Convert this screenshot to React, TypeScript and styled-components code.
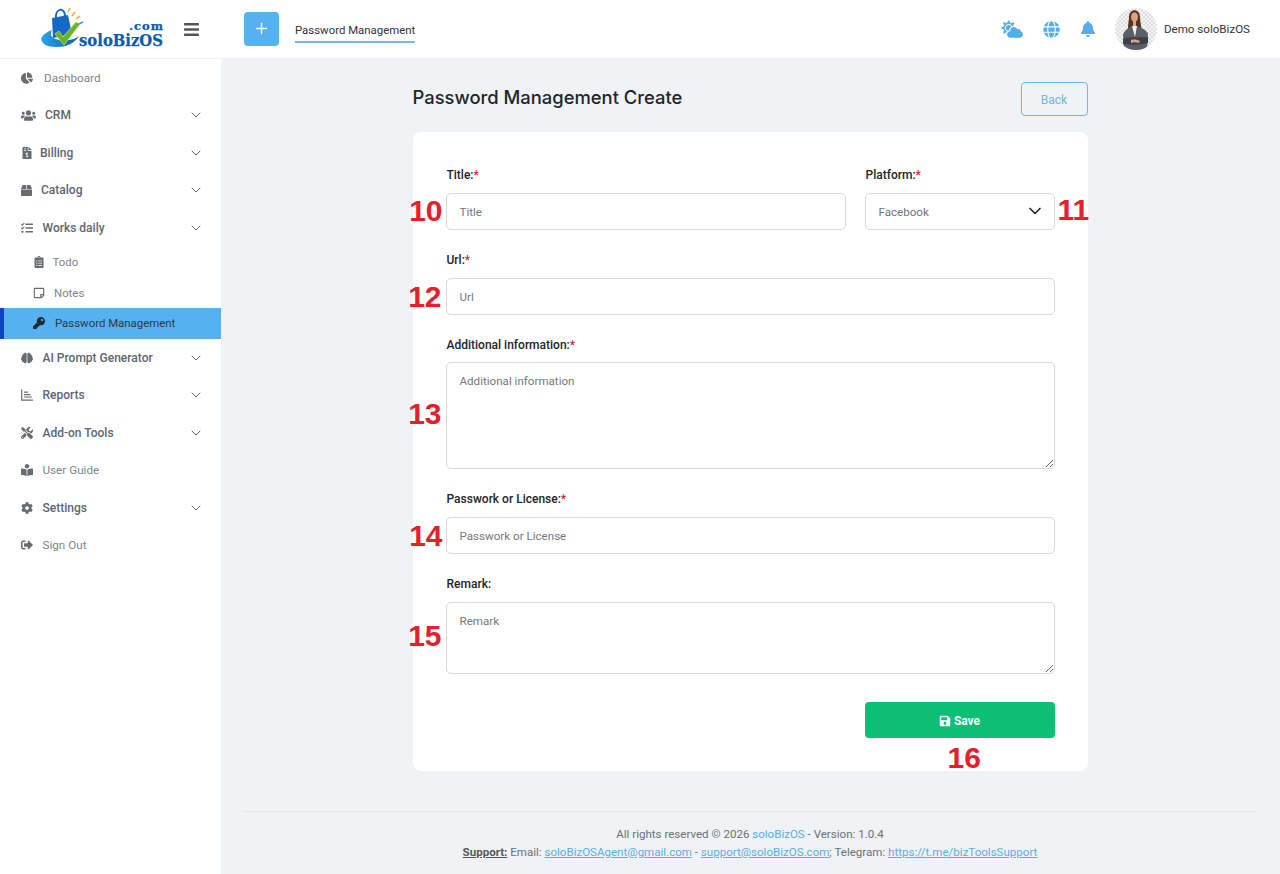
import React from "react";
import styled, { createGlobalStyle } from "styled-components";
import { ChevronDown, Plus } from "lucide-react";
import {
  FaBars, FaBell, FaBookReader, FaBox, FaBrain, FaChartPie, FaClipboardList, FaCloudSun, FaCog,
  FaFileInvoiceDollar, FaGlobe, FaKey, FaRegStickyNote, FaSave, FaSignOutAlt,
  FaTasks, FaTools, FaUsers,
} from "react-icons/fa";

const UI_FONT = `Roboto, "Open Sans", "Liberation Sans", sans-serif`;

const Global = createGlobalStyle`
  html, body { margin: 0; padding: 0; height: 100%; overflow: hidden; background: #eff3f6; }
  #root { height: 100%; }
  * { box-sizing: border-box; }
  body { font-family: ${UI_FONT}; font-size: 12px; color: #333; }
`;

const Shell = styled.div`
  display: grid;
  grid-template-columns: 221px 1fr;
  grid-template-rows: 59px 1fr;
  height: 874px;
`;

const Header = styled.header`
  grid-column: 1 / 3;
  display: flex;
  align-items: center;
  background: #fff;
  border-bottom: 1px solid #eef0f2;
`;

const Brand = styled.div`
  display: flex;
  align-items: center;
  width: 244px;
  flex: none;
  padding-left: 38px;
`;

const MenuToggle = styled.span`
  display: inline-flex;
  margin-left: 18px;
  color: #555;
  font-size: 17px;
`;

const AddButton = styled.button`
  width: 35px;
  height: 34px;
  margin-top: -1px;
  border: 0;
  border-radius: 4px;
  background: #55b1f0;
  color: #fff;
  padding: 0;
  display: flex;
  align-items: center;
  justify-content: center;
`;

const TopTab = styled.div`
  margin-left: 16px;
  padding: 6px 0 2px;
  border-bottom: 2px solid #7ab9dd;
  color: #333;
  font-size: 11.4px;
  line-height: 17px;
  margin-top: 1px;
`;

const HeaderRight = styled.div`
  margin-left: auto;
  display: flex;
  align-items: center;
  padding-right: 30px;
`;

const TopIcon = styled.span<{ $size: number; $gap: number }>`
  display: inline-flex;
  margin-right: ${(p) => p.$gap}px;
  color: #55aeea;
  font-size: ${(p) => p.$size}px;
`;

const UserName = styled.span`
  margin-left: 7px;
  color: #333;
  font-size: 11.6px;
`;

const Sidebar = styled.nav`
  background: #fff;
  display: flex;
  flex-direction: column;
`;

const NavRow = styled.div<{ $strong: boolean }>`
  height: 37.5px;
  display: flex;
  align-items: center;
  padding: 0 17px 0 21px;
  color: ${(p) => (p.$strong ? "#5c6670" : "#7d858c")};
  font-weight: ${(p) => (p.$strong ? 500 : 400)};
  font-size: ${(p) => (p.$strong ? 12 : 11.7)}px;
`;

const IconSlot = styled.span<{ $width: number; $size?: number }>`
  width: ${(p) => p.$width}px;
  flex: none;
  display: inline-flex;
  align-items: center;
  font-size: ${(p) => p.$size ?? 12}px;
  color: #666c72;
`;

const NavChevron = styled(ChevronDown)`
  margin-left: auto;
  color: #666;
`;

const SubRow = styled.div<{ $active?: boolean }>`
  height: 30.8px;
  display: flex;
  align-items: center;
  padding-left: ${(p) => (p.$active ? 29 : 33)}px;
  font-size: 11.4px;
  color: ${(p) => (p.$active ? "#2b3a4a" : "#7d858c")};
  background: ${(p) => (p.$active ? "#55b1f0" : "transparent")};
  border-left: ${(p) => (p.$active ? "4px solid #0b45c4" : "0")};
`;

const SubIcon = styled(IconSlot)<{ $dark?: boolean }>`
  color: ${(p) => (p.$dark ? "#1d2b3a" : "#666c72")};
`;

const Main = styled.main`
  display: flex;
  flex-direction: column;
  padding: 0 24px 0 23px;
`;

const Column = styled.div`
  width: 675px;
  margin: 0 auto;
`;

const TitleBar = styled.div`
  height: 73px;
  display: flex;
  align-items: flex-start;
  justify-content: space-between;
  padding-top: 23px;
`;

const PageTitle = styled.h1`
  margin: -1px 0 0;
  font: 500 18.4px/32px Inter, "Liberation Sans", sans-serif;
  color: #212529;
`;

const BackButton = styled.button`
  width: 67px;
  height: 34px;
  padding: 1px 0 0;
  border: 1px solid #6db8e0;
  border-radius: 4px;
  background: transparent;
  color: #6db8e0;
  font: 400 12px ${UI_FONT};
`;

const Card = styled.section`
  background: #fff;
  border-radius: 8px;
  height: 639px;
  padding: 32px 33px;
`;

const TopGrid = styled.div`
  display: grid;
  grid-template-columns: 400px 190px;
  column-gap: 19px;
`;

const Field = styled.div<{ $after?: number }>`
  margin-bottom: ${(p) => p.$after ?? 19}px;
`;

const Label = styled.label<{ $below?: number }>`
  display: block;
  height: 20px;
  margin-bottom: ${(p) => p.$below ?? 9}px;
  padding: 1px 0 0 1px;
  font-size: 12px;
  font-weight: 500;
  line-height: 20px;
  color: #212529;
`;

const Req = styled.span`
  color: #dc1f3c;
`;

const ControlWrap = styled.div`
  position: relative;
  display: flex;
`;

const controlCss = `
  width: 100%;
  border: 1px solid #d6d8da;
  border-radius: 5px;
  background: #fff;
  font-family: ${UI_FONT};
  font-size: 11.6px;
  color: #6f7478;
  padding: 0 13px;
  outline: none;
  &::placeholder { color: #75797d; opacity: 1; }
`;

const TextInput = styled.input`
  ${controlCss}
  height: 37px;
`;

const TextArea = styled.textarea<{ $height: number }>`
  ${controlCss}
  display: block;
  height: ${(p) => p.$height}px;
  padding-top: 10px;
  line-height: 17px;
  resize: vertical;
`;

const SelectBox = styled.select`
  ${controlCss}
  height: 37px;
  appearance: none;
`;

const SelectArrow = styled(ChevronDown)`
  position: absolute;
  right: 10px;
  top: 8px;
  color: #212529;
  pointer-events: none;
`;

const Marker = styled.span<{ $gap?: number; $side?: "left" | "right"; $lift?: number }>`
  position: absolute;
  top: 50%;
  transform: translateY(calc(-50% - ${(p) => p.$lift ?? 0}px));
  ${(p) => (p.$side === "right" ? "left" : "right")}: calc(100% + ${(p) => p.$gap ?? 4}px);
  font: 700 30px/34px "Liberation Sans", sans-serif;
  color: #e4202c;
  pointer-events: none;
`;

const SaveRow = styled.div`
  display: flex;
  justify-content: flex-end;
  margin-top: 28px;
`;

const SaveWrap = styled.div`
  position: relative;
  width: 190px;
`;

const SaveButton = styled.button`
  width: 100%;
  height: 36px;
  padding: 1px 0 0;
  border: 0;
  border-radius: 4px;
  background: #0dbf75;
  color: #fff;
  font: 700 12px ${UI_FONT};
  display: flex;
  align-items: center;
  justify-content: center;
  gap: 3px;
`;

const SaveMarker = styled.span`
  position: absolute;
  top: calc(100% + 3px);
  left: 83px;
  font: 700 30px/34px "Liberation Sans", sans-serif;
  color: #e4202c;
`;

const Footer = styled.footer`
  margin-top: 40px;
  border-top: 1px solid #e2e6ea;
  padding-top: 13px;
  text-align: center;
  font-size: 11.55px;
  line-height: 18px;
  color: #6c7075;
`;

const FootLink = styled.a<{ $plain?: boolean }>`
  color: #5aaee6;
  text-decoration: ${(p) => (p.$plain ? "none" : "underline")};
`;

const FootStrong = styled.strong`
  color: #55595d;
  text-decoration: underline;
`;

const Logo = () => (
  <svg width="127" height="44" viewBox="0 0 127 44" aria-label="soloBizOS.com">
    <defs>
      <linearGradient id="swoosh" x1="0" y1="0" x2="1" y2="0">
        <stop offset="0" stopColor="#2aa5ea" />
        <stop offset="1" stopColor="#0b5cad" />
      </linearGradient>
    </defs>
    <path d="M14 11 L30 8 L34 27 L15 31 Z" fill="#1469c7" />
    <path d="M18 11 C17 1 27 0 27 9" fill="none" stroke="#1469c7" strokeWidth="2" />
    <path d="M3 32 C5 27 9 25 14 23 C11 28 14 32 22 33 C30 34 36 33 41 29 C36 37 28 40 18 40 C9 40 4 37 3 32 Z" fill="url(#swoosh)" />
    <path d="M17 27 L21 24 L25 30 L38 15 L42 17 L26 38 Z" fill="#5fb52e" stroke="#e3d34a" strokeWidth="0.8" />
    <path d="M30 5 L32 1 M34 9 L37 5 M38 12 L42 9" stroke="#e8a530" strokeWidth="1.4" />
    <path d="M41 17 L45 15" stroke="#2aa5ea" strokeWidth="1.6" />
    <text x="125" y="23" textAnchor="end" textLength="34" fontFamily="'DejaVu Serif', serif" fontWeight="700" fontSize="11.5" fill="#0b5cad" stroke="#0b5cad" strokeWidth="0.25">.com</text>
    <text x="125" y="39" textAnchor="end" textLength="84" lengthAdjust="spacingAndGlyphs" fontFamily="'DejaVu Serif', serif" fontWeight="700" fontSize="16.5" fill="#0b5cad" stroke="#0b5cad" strokeWidth="0.25">soloBizOS</text>
  </svg>
);

const Avatar = () => (
  <svg width="42" height="42" viewBox="0 0 42 42" aria-label="Demo soloBizOS">
    <defs>
      <pattern id="chk" width="4" height="4" patternUnits="userSpaceOnUse">
        <rect width="4" height="4" fill="#f4f4f4" />
        <rect width="2" height="2" fill="#dedede" />
        <rect x="2" y="2" width="2" height="2" fill="#dedede" />
      </pattern>
      <clipPath id="disc"><circle cx="21" cy="21" r="21" /></clipPath>
    </defs>
    <g clipPath="url(#disc)">
      <rect width="42" height="42" fill="url(#chk)" />
      <path d="M14 9 C14 0 25 0 25 9 C25 14 27 19 26 24 L14 24 C12 18 14 14 14 9 Z" fill="#5a3420" />
      <ellipse cx="19.5" cy="9" rx="3.4" ry="4.6" fill="#d9a684" />
      <path d="M18 12 H21 V18 H18 Z" fill="#d9a684" />
      <path d="M9 42 L8 27 C10 21 14 20 17 18 L22 18 C26 20 31 21 33 26 L32 42 Z" fill="#5a5f6a" />
      <path d="M17 18 L22 18 L20 29 Z" fill="#f4f4f4" />
      <path d="M8 31 C14 28 24 30 33 29 L33 35 C25 37 15 37 8 36 Z" fill="#3d4049" />
      <path d="M16 32 C19 31 23 32 25 33 L24 35 C21 34 18 34 16 35 Z" fill="#d9a684" />
    </g>
  </svg>
);

const ReportsIcon = () => (
  <svg width="12" height="12" viewBox="0 0 12 12" fill="none" stroke="currentColor" strokeWidth="1.2">
    <path d="M0.7 0.5 V11.2 H12" />
    <path d="M3 3.2 H7 M3 5.6 H9.5 M3 8 H11" />
  </svg>
);

type Item = { label: string; icon: React.ReactNode; slot: number; size?: number; chevron?: boolean };

const before: Item[] = [
  { label: "Dashboard", icon: <FaChartPie />, slot: 23 },
  { label: "CRM", icon: <FaUsers />, slot: 24, size: 15, chevron: true },
  { label: "Billing", icon: <FaFileInvoiceDollar />, slot: 19, chevron: true },
  { label: "Catalog", icon: <FaBox />, slot: 20, size: 11, chevron: true },
  { label: "Works daily", icon: <FaTasks />, slot: 21.5, chevron: true },
];

const after: Item[] = [
  { label: "AI Prompt Generator", icon: <FaBrain />, slot: 21.5, chevron: true },
  { label: "Reports", icon: <ReportsIcon />, slot: 21.5, chevron: true },
  { label: "Add-on Tools", icon: <FaTools />, slot: 21.5, chevron: true },
  { label: "User Guide", icon: <FaBookReader />, slot: 21.5 },
  { label: "Settings", icon: <FaCog />, slot: 21.5, chevron: true },
  { label: "Sign Out", icon: <FaSignOutAlt />, slot: 21.5 },
];

const NavItem = ({ item }: { item: Item }) => (
  <NavRow $strong={!!item.chevron}>
    <IconSlot $width={item.slot} $size={item.size}>{item.icon}</IconSlot>
    {item.label}
    {item.chevron && <NavChevron size={16} strokeWidth={1.5} />}
  </NavRow>
);

export default function App() {
  return (
    <>
      <Global />
      <Shell>
        <Header>
          <Brand>
            <Logo />
            <MenuToggle><FaBars /></MenuToggle>
          </Brand>
          <AddButton><Plus size={17} strokeWidth={2} /></AddButton>
          <TopTab>Password Management</TopTab>
          <HeaderRight>
            <TopIcon $size={22} $gap={20}><FaCloudSun /></TopIcon>
            <TopIcon $size={17} $gap={20}><FaGlobe /></TopIcon>
            <TopIcon $size={16} $gap={19}><FaBell /></TopIcon>
            <Avatar />
            <UserName>Demo soloBizOS</UserName>
          </HeaderRight>
        </Header>

        <Sidebar>
          {before.map((item) => <NavItem key={item.label} item={item} />)}
          <SubRow><SubIcon $width={19.5}><FaClipboardList /></SubIcon>Todo</SubRow>
          <SubRow><SubIcon $width={21}><FaRegStickyNote /></SubIcon>Notes</SubRow>
          <SubRow $active><SubIcon $width={22} $dark><FaKey /></SubIcon>Password Management</SubRow>
          {after.map((item) => <NavItem key={item.label} item={item} />)}
        </Sidebar>

        <Main>
          <Column>
            <TitleBar>
              <PageTitle>Password Management Create</PageTitle>
              <BackButton>Back</BackButton>
            </TitleBar>
            <Card>
              <TopGrid>
                <Field>
                  <Label>Title:<Req>*</Req></Label>
                  <ControlWrap>
                    <TextInput placeholder="Title" />
                    <Marker $gap={3} $lift={1}>10</Marker>
                  </ControlWrap>
                </Field>
                <Field>
                  <Label>Platform:<Req>*</Req></Label>
                  <ControlWrap>
                    <SelectBox defaultValue="Facebook"><option>Facebook</option></SelectBox>
                    <SelectArrow size={20} strokeWidth={2} />
                    <Marker $side="right" $gap={3} $lift={2}>11</Marker>
                  </ControlWrap>
                </Field>
              </TopGrid>
              <Field>
                <Label>Url:<Req>*</Req></Label>
                <ControlWrap>
                  <TextInput placeholder="Url" />
                  <Marker>12</Marker>
                </ControlWrap>
              </Field>
              <Field>
                <Label $below={8}>Additional information:<Req>*</Req></Label>
                <ControlWrap>
                  <TextArea $height={107} placeholder="Additional information" />
                  <Marker $lift={2}>13</Marker>
                </ControlWrap>
              </Field>
              <Field>
                <Label>Passwork or License:<Req>*</Req></Label>
                <ControlWrap>
                  <TextInput placeholder="Passwork or License" />
                  <Marker $gap={3}>14</Marker>
                </ControlWrap>
              </Field>
              <Field $after={0}>
                <Label>Remark:</Label>
                <ControlWrap>
                  <TextArea $height={72} placeholder="Remark" />
                  <Marker $lift={2}>15</Marker>
                </ControlWrap>
              </Field>
              <SaveRow>
                <SaveWrap>
                  <SaveButton><FaSave /> Save</SaveButton>
                  <SaveMarker>16</SaveMarker>
                </SaveWrap>
              </SaveRow>
            </Card>
          </Column>
          <Footer>
            All rights reserved © 2026 <FootLink $plain>soloBizOS</FootLink> - Version: 1.0.4
            <br />
            <FootStrong>Support:</FootStrong> Email: <FootLink>soloBizOSAgent@gmail.com</FootLink> - <FootLink>support@soloBizOS.com</FootLink>; Telegram: <FootLink>https://t.me/bizToolsSupport</FootLink>
          </Footer>
        </Main>
      </Shell>
    </>
  );
}
